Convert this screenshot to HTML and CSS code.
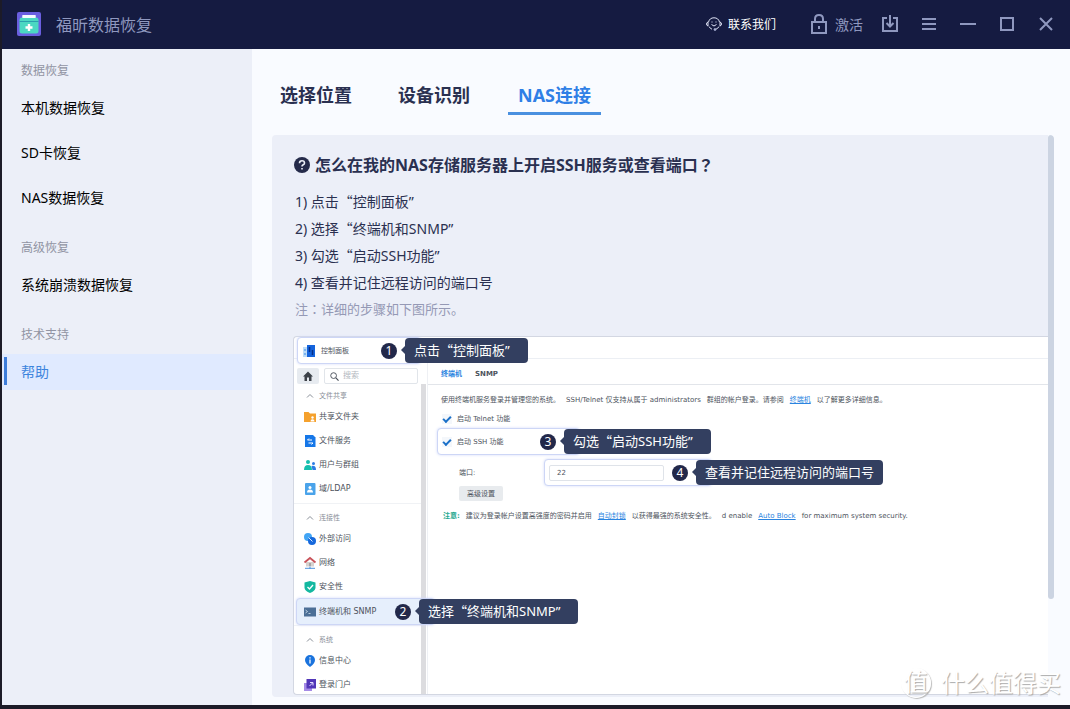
FILE: index.html
```html
<!DOCTYPE html>
<html lang="zh-CN">
<head>
<meta charset="utf-8">
<title>福昕数据恢复</title>
<link rel="stylesheet" href="styles.css">
</head>
<body>
<div class="window">
  <header class="titlebar">
    <svg class="logo" viewBox="0 0 24 24" aria-hidden="true">
      <rect width="24" height="24" rx="2" fill="#6a5fe0"/>
      <rect x="5.500" y="3" width="13" height="5" rx="1" fill="#f4fbff"/>
      <path d="M2.500 8q0-2.500 2.500-2.500h14q2.500 0 2.500 2.500v11q0 2.500-2.500 2.500H5q-2.500 0-2.500-2.500z" fill="#4bd8c2"/>
      <path d="M5.500 3h13v3h-13z" fill="#f4fbff"/>
      <path d="M2.500 9.500h19" stroke="#2b9fae"/>
      <path d="M12 12v7M8.500 15.500h7" stroke="#fff" stroke-width="2.400"/>
    </svg>
    <h1 class="app-name">福昕数据恢复</h1>
    <button class="contact" type="button">
      <svg class="ico" viewBox="0 0 16 16" aria-hidden="true">
        <path d="M2.500 6a5.700 5.700 0 0 1 11 0M13 10.500a5.500 5.500 0 0 1-3 2.700M3 10.500q1 2 3 2.700" stroke="#dfe3f5"/>
        <path d="M2 6v4Q.5 9.500.5 8T2 6zM14 6v4q1.500-.5 1.500-2T14 6z" stroke="#dfe3f5"/>
        <path d="M5.500 8.500q2.500 3 5 0M6 5.500v1M10 5.500v1" stroke="#dfe3f5"/>
        <circle cx="9" cy="13.500" r="1" fill="#dfe3f5"/>
      </svg>
      联系我们
    </button>
    <button class="activate" type="button">
      <svg class="lock" viewBox="0 0 16 20" aria-hidden="true">
        <rect x="1" y="8" width="14" height="11" stroke-width="2"/>
        <path d="M4 8V5q0-4 4-4t4 4v3" stroke-width="2"/>
        <path d="M8 12v3" stroke-width="2"/>
      </svg>
      激活
    </button>
    <div class="controls">
      <button type="button" aria-label="下载"><svg class="ico" viewBox="0 0 16 16"><path d="M5 2H1v13h14V2h-4M8-1v11M4.500 7 8 10.500 11.500 7" stroke-width="2"/></svg></button>
      <button type="button" aria-label="菜单"><svg class="ico" viewBox="0 0 16 16"><path d="M1 3h14M1 8h14M1 13h14" stroke-width="2"/></svg></button>
      <button type="button" aria-label="最小化"><svg class="ico" viewBox="0 0 16 16"><path d="M0 8h16" stroke-width="2"/></svg></button>
      <button type="button" aria-label="最大化"><svg class="ico" viewBox="0 0 16 16"><path d="M2 2h12v12H2z" stroke-width="2"/></svg></button>
      <button type="button" aria-label="关闭"><svg class="ico" viewBox="0 0 16 16"><path d="m2 2 12 12M14 2 2 14" stroke-width="2"/></svg></button>
    </div>
  </header>

  <div class="layout">
    <nav class="sidebar">
      <h2>数据恢复</h2>
      <a href="#local">本机数据恢复</a>
      <a href="#sd">SD卡恢复</a>
      <a href="#nas">NAS数据恢复</a>
      <h2>高级恢复</h2>
      <a href="#crash">系统崩溃数据恢复</a>
      <h2>技术支持</h2>
      <a href="#help" class="current">帮助</a>
    </nav>

    <main class="content">
      <div class="tabs">
        <a href="#place">选择位置</a>
        <a href="#device">设备识别</a>
        <a href="#connect" class="active">NAS连接</a>
      </div>

      <section class="panel">
        <div class="panel-body">
          <h3 class="question">
            <svg viewBox="0 0 16 16" aria-hidden="true"><circle cx="8" cy="8" r="8" fill="#252b4a"/><path d="M5.500 6.200q0-2.500 2.500-2.500t2.500 2.200q0 1.200-1.300 1.900T8 9.500M8 11v1.600" fill="none" stroke="#eef1f8" stroke-width="1.600"/></svg>
            <span class="question-text">怎么在我的NAS存储服务器上开启SSH服务或查看端口<span class="mid" lang="zh-TW">？</span></span>
          </h3>
          <ol class="steps">
            <li>1) 点击<span class="wide">“</span>控制面板”</li>
            <li>2) 选择<span class="wide">“</span>终端机和SNMP”</li>
            <li>3) 勾选<span class="wide">“</span>启动SSH功能”</li>
            <li>4) 查看并记住远程访问的端口号</li>
          </ol>
          <p class="note">注<span class="mid" lang="zh-TW">：</span>详细的步骤如下图所示。</p>

          <div class="shot">
            <div class="shot-head">
              <div class="card card-panel">
                <svg class="mini" viewBox="0 0 12 12" aria-hidden="true"><path d="M0 2h5v10H0z" fill="#bcdcf8"/><rect x="4" width="8" height="12" fill="#1463dc"/><path d="M6.500 2v5M9.500 5v5" stroke="#062f86" stroke-width="1.500"/><path d="M1 9h2M1 5h2" stroke="#3a8be8"/></svg>
                控制面板
                <div class="callout"><span class="badge">1</span><span class="tip">点击<span class="wide">“</span>控制面板”</span></div>
              </div>
            </div>
            <div class="shot-body">
              <div class="side">
                <div class="side-top">
                  <button class="home" type="button" aria-label="主页"><svg viewBox="0 0 10 10"><path d="M0 5.500 5 .5l5 5H8.500V10H6V6.500H4V10H1.500V5.500z" fill="#3c4148"/></svg></button>
                  <label class="search"><svg viewBox="0 0 10 10" aria-hidden="true"><circle cx="4" cy="4" r="3.200" fill="none" stroke="#444b55"/><path d="m6.500 6.500 3 3" stroke="#444b55" stroke-width="1.300"/></svg><input type="text" placeholder="搜索" aria-label="搜索"></label>
                </div>
                <div class="side-scroll">
                  <div class="tree">
                    <div class="group">
                      <h4><svg viewBox="0 0 8 8" aria-hidden="true"><path d="M1 5.500 4 2.500l3 3" fill="none" stroke="#8a9099"/></svg>文件共享</h4>
                      <a href="#f1"><svg class="mini" viewBox="0 0 12 12"><path d="M0 1h4.500L6 2.500h6V11H0z" fill="#f5a12d"/><circle cx="8.500" cy="6.500" r="1.200" fill="#fff"/><path d="M6.500 10.500q0-2.300 2-2.300t2 2.300z" fill="#fff"/></svg>共享文件夹</a>
                      <a href="#f2"><svg class="mini" viewBox="0 0 12 12"><path d="M1 0h8l2.500 2.500V12H1z" fill="#1677e8"/><path d="M8 5H3.500L5 3.500M4.500 8H9L7.500 9.500" fill="none" stroke="#fff"/></svg>文件服务</a>
                      <a href="#f3"><svg class="mini" viewBox="0 0 12 12"><circle cx="4" cy="3" r="2" fill="#15bfae"/><path d="M0 11q0-5 4-5t4 5z" fill="#15bfae"/><circle cx="9.500" cy="4.500" r="1.500" fill="#2b7de4"/><path d="M7.500 7q4.500-1 4.500 4H8.500z" fill="#2b7de4"/></svg>用户与群组</a>
                      <a href="#f4"><svg class="mini" viewBox="0 0 12 12"><rect x="1" width="10.500" height="12" rx="1" fill="#4aa3ea"/><circle cx="6" cy="4.500" r="1.500" fill="#fff"/><path d="M3 9.500q0-3 3-3t3 3z" fill="#fff"/></svg>域/LDAP</a>
                    </div>
                    <div class="group">
                      <h4><svg viewBox="0 0 8 8" aria-hidden="true"><path d="M1 5.500 4 2.500l3 3" fill="none" stroke="#8a9099"/></svg>连接性</h4>
                      <a href="#c1"><svg class="mini" viewBox="0 0 12 12"><circle cx="4" cy="4" r="4" fill="#42a5f5"/><circle cx="8" cy="8" r="4" fill="#1769dc"/><path d="m4.500 4.500 4 4" stroke="#d7ebff" fill="none"/></svg>外部访问</a>
                      <a href="#c2"><svg class="mini" viewBox="0 0 12 12"><path d="M2 5h8v4.500H2z" fill="#d5d2cf"/><path d="M.5 5.500 6 1l5.500 4.500" fill="none" stroke="#c9525a" stroke-width="1.800"/><path d="M5 6h2v3H5z" fill="#a9a6a8"/><path d="M1 11.300h10M6 9.500v2.500" stroke="#4e91dd"/></svg>网络</a>
                      <a href="#c3"><svg class="mini" viewBox="0 0 12 12"><path d="M6 0 11.500 1.500V7Q11 10 6 12 1 10 .5 7V1.500z" fill="#14b8a0"/><path d="M3.500 6 5.500 8l3.500-4" fill="none" stroke="#fff" stroke-width="1.300"/></svg>安全性</a>
                      <div class="card card-terminal">
                        <svg class="mini" viewBox="0 0 12 12" aria-hidden="true"><rect y="1.500" width="12" height="9" fill="#4c6f96"/><path d="m1.500 4 2 1.500-2 1.500M4.500 7.500h2" fill="none" stroke="#d6e4f2" stroke-width=".8"/></svg>
                        终端机和 SNMP
                        <div class="callout"><span class="badge">2</span><span class="tip">选择<span class="wide">“</span>终端机和SNMP”</span></div>
                      </div>
                    </div>
                    <div class="group">
                      <h4><svg viewBox="0 0 8 8" aria-hidden="true"><path d="M1 5.500 4 2.500l3 3" fill="none" stroke="#8a9099"/></svg>系统</h4>
                      <a href="#s1"><svg class="mini" viewBox="0 0 12 12"><path d="M6 12Q1 8.500 1 5a5 5 0 0 1 10 0q0 3.500-5 7z" fill="#1a73dd"/><path d="M6 4.500v4M6 2.200v1.300" stroke="#fff" stroke-width="1.300"/></svg>信息中心</a>
                      <a href="#s2"><svg class="mini" viewBox="0 0 12 12"><path d="M0 4h8v8H0z" fill="#a58be6"/><path d="M2.500 0H12v9.500H2.500z" fill="#5236b8"/><path d="m5.500 7 3-3M6 3.500h3v3" fill="none" stroke="#e3dcff"/></svg>登录门户</a>
                    </div>
                  </div>
                  <div class="side-bar"></div>
                </div>
              </div>

              <div class="pane">
                <div class="pane-tabs"><a href="#t1" class="on">终端机</a><a href="#t2">SNMP</a></div>
                <p class="desc"><span>使用终端机服务登录并管理您的系统。</span><span>SSH/Telnet 仅支持从属于 administrators</span><span>群组的帐户登录。请参阅</span><a href="#term">终端机</a><span>以了解更多详细信息。</span></p>
                <label class="check"><input type="checkbox" checked>启动 Telnet 功能</label>
                <div class="card card-ssh">
                  <label class="check"><input type="checkbox" checked>启动 SSH 功能</label>
                  <div class="callout"><span class="badge">3</span><span class="tip">勾选<span class="wide">“</span>启动SSH功能”</span></div>
                </div>
                <div class="port-row">
                  <label for="port">端口:</label>
                  <div class="card card-port">
                    <input id="port" type="text" value="22">
                    <div class="callout"><span class="badge">4</span><span class="tip">查看并记住远程访问的端口号</span></div>
                  </div>
                </div>
                <button class="advanced" type="button">高级设置</button>
                <p class="desc remark"><b>注意:</b><span>建议为登录帐户设置高强度的密码并启用</span><a href="#ban">自动封锁</a><span>以获得最强的系统安全性。</span><span>d enable</span><a href="#block">Auto Block</a><span>for maximum system security.</span></p>
              </div>
            </div>
          </div>
        </div>
        <div class="scrollbar"></div>
      </section>
    </main>
  </div>
  <div class="watermark"><span class="seal">值</span>什么值得买</div>
</div>
</body>
</html>
```
FILE: styles.css
```css
* { box-sizing: border-box; margin: 0; padding: 0; }

body {
  font-family: "Noto Sans", "Noto Sans CJK SC", sans-serif;
  font-size: 14px;
  color: #2a3050;
  background: #1c1b28;
}

a { color: inherit; text-decoration: none; }
button { font: inherit; border: 0; background: none; color: inherit; }
svg { display: block; flex: none; overflow: visible; }

.window {
  position: relative;
  display: flex;
  flex-direction: column;
  height: 100vh;
  border: solid #1c1b28;
  border-width: 0 0 4px 2px;
}

/* title bar */
.titlebar {
  display: flex;
  align-items: center;
  flex: none;
  height: 49px;
  padding: 0 16px 2px 15px;
  background: #151b41;
  color: #8f98bf;
}
.logo { width: 24px; height: 24px; margin-right: 15px; }
.app-name { flex: 1; font-size: 16px; font-weight: 400; }
.ico { width: 16px; height: 16px; }
.ico, .lock { fill: none; stroke: #8f98bf; }
.lock { width: 16px; height: 20px; }
.contact, .activate { display: flex; align-items: center; }
.contact { gap: 6px; margin-right: 35px; font-size: 12px; color: #fff; }
.activate { gap: 8px; margin-right: 19px; }
.controls { display: flex; gap: 23px; }

/* layout */
.layout { display: flex; flex: 1; min-height: 0; background: #f9fbff; }
.sidebar { flex: none; width: 250px; padding-top: 10px; background: #eceff8; }
.sidebar h2 {
  margin: 20px 0 7px;
  padding-left: 19px;
  font-size: 12px;
  font-weight: 400;
  line-height: 24px;
  color: #9194a3;
}
.sidebar h2:first-child { margin-top: 0; }
.sidebar a { display: flex; align-items: center; height: 36px; padding: 0 0 2px 19px; color: #000; }
.sidebar a + a { margin-top: 9px; }
.sidebar .current { position: relative; background: #e0eaff; color: #3d84dd; }
.sidebar .current::before { content: ""; position: absolute; left: 2px; top: 3px; bottom: 5px; width: 3px; background: #3d7ddb; }

.content { display: flex; flex: 1; flex-direction: column; min-width: 0; padding: 30px 16px 8px 20px; }
.tabs { display: flex; gap: 30px; flex: none; margin-bottom: 20px; }
.tabs a {
  padding: 0 8px;
  font-size: 18px;
  font-weight: 700;
  line-height: 33px;
  border-bottom: 3px solid transparent;
}
.tabs .active { padding: 0 10px; color: #2f7fe6; border-color: #4a90e0; }

/* help panel */
.panel { display: flex; flex: 1; min-height: 0; overflow: hidden; border-radius: 4px; }
.panel-body { display: flex; flex: 1; flex-direction: column; min-width: 0; padding: 18px 0 2px 21px; background: #eceff8; }
.scrollbar { flex: none; width: 6px; height: 464px; border-radius: 3px; background: #ccd4e2; }
.question { display: flex; align-items: center; gap: 5px; height: 24px; padding-left: 1px; font-size: 16px; font-weight: 700; }
.question svg { width: 16px; height: 16px; }
.question-text { padding-bottom: 2px; }
.mid { font-family: "Noto Sans CJK TC", sans-serif; }
.wide { font-family: "Noto Sans CJK SC", sans-serif; }
.steps { margin-top: 11px; padding-left: 2px; list-style: none; line-height: 27px; }
.note { margin-top: 1px; padding-left: 2px; font-size: 13px; line-height: 24px; color: #9599b5; }

/* illustrated settings window */
.shot {
  display: flex;
  flex: 1;
  flex-direction: column;
  min-height: 0;
  margin-top: 15px;
  border: 1px solid #d3d7e2;
  border-right: 0;
  border-radius: 4px 0 0 4px;
  background: #fff;
  font-family: "DejaVu Sans", "Noto Sans CJK SC", sans-serif;
  font-size: 8px;
  line-height: 12px;
  color: #4d535c;
}
.shot-head { flex: none; height: 22px; padding-left: 3px; border-bottom: 1px solid #eceff4; }
.shot-body { display: flex; flex: 1; min-height: 0; }
.mini { width: 12px; height: 12px; }

.card {
  position: relative;
  z-index: 1;
  display: flex;
  align-items: center;
  height: 27px;
  border: 1px solid #cdd6f6;
  border-radius: 4px;
  background: #fff;
  box-shadow: 0 0 3px #d3dbfa;
}
.card-panel { width: 124px; padding-left: 5px; gap: 6px; font-size: 7px; }
.card-terminal { width: 139px; height: 27px; margin: -1px 0 -2px 2px; padding-left: 7px; gap: 3px; background: #e6effc; }
.card-ssh { width: 143px; padding-left: 4px; }
.card-port { width: 168px; padding-left: 4px; }

.callout { position: absolute; top: 0; left: calc(100% - 39px); display: flex; align-items: center; gap: 8px; height: 25px; }
.badge {
  width: 16px;
  height: 16px;
  border-radius: 50%;
  background: #22284a;
  color: #fff;
  font: 12px/16px "Noto Sans", sans-serif;
  text-align: center;
}
.tip {
  position: relative;
  padding: 0 9px;
  border-radius: 4px;
  background: #333f60;
  color: #fff;
  font: 13px/25px "Noto Sans", "Noto Sans CJK SC", sans-serif;
  white-space: nowrap;
}
.card-panel .tip, .card-terminal .tip, .card-ssh .tip { padding-right: 18px; }
.tip::before { content: ""; position: absolute; left: -4px; top: 8px; border: solid transparent; border-width: 4px 4px 4px 0; border-right-color: #333f60; }
.tip .wide { line-height: 12px; }

.side { display: flex; flex: none; flex-direction: column; width: 133px; padding-top: 9px; }
.side-top { display: flex; flex: none; gap: 5px; height: 16px; padding-left: 3px; }
.home { display: grid; place-items: center; width: 22px; background: #e7ebf0; border-radius: 2px; }
.home svg { width: 10px; height: 10px; }
.search { display: flex; align-items: center; gap: 4px; width: 94px; padding-left: 5px; border: 1px solid #e1e5ea; border-radius: 2px; }
.search svg { width: 9px; height: 9px; }
.search input { width: 60px; border: 0; background: none; font: inherit; }
.search input::placeholder { color: #b3b8c0; }
.side-scroll { display: flex; flex: 1; min-height: 0; }
.tree { flex: 1; min-width: 0; padding-top: 3px; }
.side-bar { flex: none; width: 5px; margin-right: 1px; background: #dcdcdf; }
.group + .group { margin-top: 2px; padding-top: 5px; border-top: 1px solid #f0f2f5; }
.group h4 { display: flex; align-items: center; gap: 5px; height: 18px; padding-left: 12px; font-size: 7px; font-weight: 400; color: #8a9099; }
.group h4 svg { width: 8px; height: 8px; }
.group a { display: flex; align-items: center; gap: 3px; height: 24px; padding-left: 10px; }

.pane { flex: 1; min-width: 0; border-left: 1px solid #eef0f4; font-size: 7px; }
.pane-tabs { display: flex; gap: 13px; padding: 9px 0 4px 13px; border-bottom: 1px solid #e2e5ea; font-weight: 700; }
.pane-tabs .on { color: #2a84e0; }
.desc { display: flex; gap: 6px; padding: 9px 0 5px 13px; white-space: nowrap; }
.desc a { color: #2a84e0; text-decoration: underline; }
.check { display: flex; align-items: center; gap: 5px; }
.pane > .check { height: 16px; padding-left: 14px; }
.check input {
  appearance: none;
  width: 10px;
  height: 10px;
  background: #f4f7fb;
}
.check input::before { content: ""; display: block; width: 8px; height: 4px; margin: 2px 1px; border: solid #1a70c8; border-width: 0 0 2px 2px; transform: rotate(-45deg); }
.check input { display: flex; align-items: flex-start; }
.check input::before { box-sizing: border-box; margin: 2px 1px 0; height: 5px; }
.card-ssh { margin: 1px 0 4px 9px; }
.port-row { display: flex; align-items: center; height: 27px; padding-left: 31px; }
.port-row label { width: 85px; }
.card-port input { width: 115px; height: 16px; padding-left: 7px; border: 1px solid #dfe3e9; border-radius: 2px; font: inherit; color: inherit; }
.advanced { display: block; height: 15px; margin-left: 31px; padding: 0 8px; background: #e8ebee; border-radius: 2px; }
.remark { padding-left: 15px; }
.remark b { color: #1fa88f; }

.watermark {
  position: absolute;
  right: 9px;
  bottom: 6px;
  z-index: 2;
  display: flex;
  align-items: center;
  gap: 10px;
  font-size: 24px;
  line-height: 32px;
  color: #fff;
  text-shadow: 1px 1px 1px #aaa;
}
.seal { width: 30px; height: 30px; border: 1px solid #fff; border-radius: 50%; box-shadow: 1px 1px 1px #bbb; line-height: 26px; text-align: center; }
```
